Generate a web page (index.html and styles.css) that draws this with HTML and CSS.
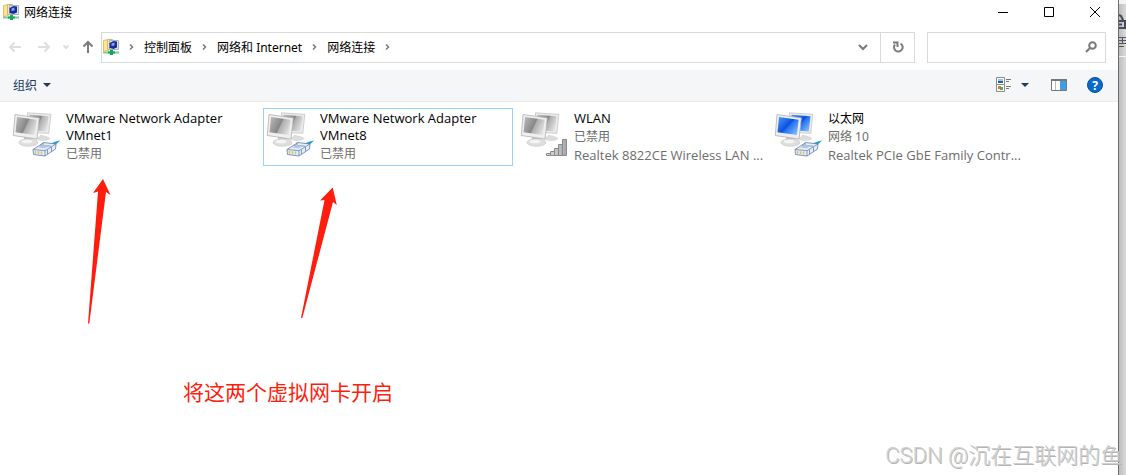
FILE: index.html
```
<!DOCTYPE html>
<html lang="zh-cn">

<head>
    <meta charset="UTF-8">
    <meta name="viewport" content="width=device-width, initial-scale=1.0">
    <title>网络连接</title>
    <link rel="stylesheet" href="styles.css">
</head>

<body>
    <!-- 公用图形 -->
    <svg class="defs" aria-hidden="true">
        <defs>
            <linearGradient id="grayScreen" x1="0" y1="0.3" x2="1" y2="0.7">
                <stop offset="0" stop-color="#b4b4b4" />
                <stop offset="0.48" stop-color="#868686" />
                <stop offset="0.52" stop-color="#acacac" />
                <stop offset="1" stop-color="#e6e6e6" />
            </linearGradient>
            <linearGradient id="blueScreen" x1="0" y1="0.1" x2="1" y2="0.9">
                <stop offset="0" stop-color="#4a96f6" />
                <stop offset="0.48" stop-color="#0a4fdd" />
                <stop offset="0.52" stop-color="#1f6cf0" />
                <stop offset="1" stop-color="#8cc4ff" />
            </linearGradient>
            <linearGradient id="barFill" x1="0" y1="0" x2="1" y2="0">
                <stop offset="0" stop-color="#dedede" />
                <stop offset="1" stop-color="#a8a8a8" />
            </linearGradient>
            <symbol id="netIcon" viewBox="0 0 16 16">
                <path d="M0.5 1.5l5-1v11l-5 1z" fill="#fbe696" stroke="#dcc06a" />
                <path d="M4.500.5h5v10h-5z" fill="#f8e7a5" stroke="#cdb878" />
                <path d="M6.500 1.500h9v9h-9z" fill="#dfe5ee" stroke="#a9b4c4" />
                <path d="M6.500 4l4-2 3.500.5v6l-3.500 1.500-4-1z" fill="#1a2a9e" />
                <path d="M8.500 4.500l3-1v3l-3 .5z" fill="#7fa9f5" />
                <path d="M8.500 10v3M0 13.500h16" stroke="#86c7a2" stroke-width="2" />
                <path d="M5 12.500h7v2H5zM7 11h3v5H7z" fill="#12a85a" />
            </symbol>
            <symbol id="monitors" viewBox="0 2 48 48">
                <path d="M28 27l6 1 1 3-8-1z" fill="#cfcfcf" />
                <ellipse cx="31" cy="30.500" rx="7" ry="2.500" fill="#dcdcdc" />
                <path d="M15.500 4.800l23.300 1.500-2 19-21-1z" fill="#ececec" stroke="#bdbdbd" stroke-width=".7" />
                <path d="M17.500 6.800l19 1.400-1.700 15.300-17-1.500z" fill="var(--screen)" />
                <path d="M12 29l8 1 1 4h-9z" fill="#bfbfbf" />
                <ellipse cx="16.500" cy="34.500" rx="9.500" ry="3.800" fill="#dedede" stroke="#c6c6c6" stroke-width=".6" />
                <ellipse cx="15" cy="33.500" rx="5.500" ry="1.800" fill="#f4f4f4" />
                <path d="M3 6.500L27.300 10 25 31 1.300 27.500z" fill="#efefef" stroke="#b2b2b2" stroke-width=".8" />
                <path d="M5 9l19.700 2.800-1.800 15.200L3.500 24.200z" fill="var(--screen)" />
            </symbol>
            <symbol id="plug" viewBox="0 2 48 48">
                <path d="M35 36.500c4-.5 6-3 13-4l-3.500 3.500-4 3z" fill="#55c0e4" />
                <path d="M41 35l7-2.500-6 5z" fill="#2193c4" />
                <path d="M21 41.500l11-7 12 1.500-.5 5L33 48l-11.500-1.500z" fill="#e4edf8" stroke="#5f7ba8" stroke-width=".8" />
                <path d="M21 41.500l12 1.200L44 36M33 42.700V48M28 37l3 .4v-3M31 37.400l8 .8M35.500 41.500v4.500M39.500 39v4.500" fill="none" stroke="#6c87b2" stroke-width=".8" />
                <path d="M26 39.500l7 .7 4-2.500-6.500-.7z" fill="#b4c6e0" />
                <path d="M23.500 43v2.700M26.500 43.300v2.700M29.500 43.600v2.700" stroke="#cfc268" stroke-width="1.500" />
            </symbol>
            <symbol id="signal" viewBox="0 2 48 48">
                <path d="M26.500 45.500h4v2h-4zM30.500 43.500h4v4h-4zM34.500 40.500h4v7h-4zM38.500 36.500h4v11h-4zM42.500 31.500h4v16h-4z" fill="url(#barFill)" stroke="#8a8a8a" />
            </symbol>
            <symbol id="chevron" viewBox="0 0 8 8">
                <path d="M2.500 1.500L5 4 2.500 6.500" fill="none" stroke="#7a7a7a" stroke-width="1.500" />
            </symbol>
        </defs>
    </svg>

    <div class="window">
        <header class="title-bar">
            <svg class="net-icon"><use href="#netIcon" /></svg>
            <h1>网络连接</h1>
            <div class="window-buttons">
                <button aria-label="最小化"><svg width="12" height="12"><path d="M1 6.500h10" /></svg></button>
                <button aria-label="最大化"><svg width="12" height="12"><path d="M1.500 1.500h9v9h-9z" /></svg></button>
                <button aria-label="关闭"><svg width="12" height="12"><path d="M1 1l10 10M11 1L1 11" /></svg></button>
            </div>
        </header>

        <nav class="nav-bar">
            <div class="nav-buttons">
                <button class="faded" aria-label="后退"><svg width="14" height="12"><path d="M13 6H2M6.500 1.500L2 6l4.500 4.500" /></svg></button>
                <button class="faded" aria-label="前进"><svg width="14" height="12"><path d="M1 6h11M7.500 1.500L12 6l-4.500 4.500" /></svg></button>
                <button class="faded recent" aria-label="最近位置"><svg width="8" height="6"><path d="M1.500 1.500L4 4l2.500-2.500" /></svg></button>
                <button aria-label="上移"><svg width="12" height="14"><path d="M6 13V2M1.500 6.500L6 2l4.500 4.500" /></svg></button>
            </div>
            <div class="address">
                <svg class="net-icon"><use href="#netIcon" /></svg>
                <svg class="chevron"><use href="#chevron" /></svg>
                <a href="#">控制面板</a>
                <svg class="chevron"><use href="#chevron" /></svg>
                <a href="#">网络和 Internet</a>
                <svg class="chevron"><use href="#chevron" /></svg>
                <a href="#">网络连接</a>
                <svg class="chevron"><use href="#chevron" /></svg>
                <button class="drop" aria-label="历史记录"><svg width="10" height="8"><path d="M1 2l4 4 4-4" /></svg></button>
                <button class="refresh" aria-label="刷新"><svg width="12" height="12"><path d="M8.500 2.500a4.300 4.300 0 1 1-5.500 1M1 1.500h4.500V6" /></svg></button>
            </div>
            <div class="search">
                <input type="text" aria-label="搜索">
                <svg width="12" height="12"><circle cx="7.500" cy="4.500" r="3.300" /><path d="M5 7L1 11" /></svg>
            </div>
        </nav>

        <div class="toolbar">
            <button class="organize">组织<span class="caret"></span></button>
            <div class="tools">
                <button class="view" aria-label="更改视图">
                    <svg width="16" height="16">
                        <path d="M.5.5h8v7h-8zM.5 7.500h8v7h-8z" fill="#fff" stroke="#8c8c8c" />
                        <path d="M2 2h5v2H2z" fill="#8fc9f3" />
                        <path d="M2 4h5v2H2z" fill="#31608f" />
                        <path d="M2 9h3v3H2z" fill="#e0743c" />
                        <path d="M4 10h3v3H4z" fill="#58a845" />
                        <path d="M10 2.500h5M10 4.500h3M10 9.500h5M10 11.500h3" stroke="#777" />
                    </svg>
                    <span class="caret"></span>
                </button>
                <button class="pane" aria-label="预览窗格">
                    <svg width="16" height="12">
                        <path d="M.5.5h15v11H.5z" fill="#fff" stroke="#777" />
                        <path d="M0 1h16" stroke="#777" stroke-width="2" />
                        <path d="M4.500 2v9" stroke="#bbb" />
                        <path d="M9 2h6v9H9z" fill="#3f9ee8" />
                    </svg>
                </button>
                <button class="help" aria-label="帮助">?</button>
            </div>
        </div>

        <main class="content">
            <ul class="connections">
                <li class="connection">
                    <svg class="icon"><use href="#monitors" /><use href="#plug" /></svg>
                    <div class="info">
                        <h2 class="device">VMware Network Adapter VMnet1</h2>
                        <p>已禁用</p>
                    </div>
                </li>
                <li class="connection selected">
                    <svg class="icon"><use href="#monitors" /><use href="#plug" /></svg>
                    <div class="info">
                        <h2 class="device">VMware Network Adapter VMnet8</h2>
                        <p>已禁用</p>
                    </div>
                </li>
                <li class="connection">
                    <svg class="icon"><use href="#monitors" /><use href="#signal" /></svg>
                    <div class="info">
                        <h2 class="device">WLAN</h2>
                        <p>已禁用</p>
                        <p class="device">Realtek 8822CE Wireless LAN ...</p>
                    </div>
                </li>
                <li class="connection enabled">
                    <svg class="icon"><use href="#monitors" /><use href="#plug" /></svg>
                    <div class="info">
                        <h2>以太网</h2>
                        <p>网络 10</p>
                        <p class="device">Realtek PCIe GbE Family Contr...</p>
                    </div>
                </li>
            </ul>
        </main>
    </div>

    <aside class="behind">
        <svg width="7" height="60">
            <path d="M0 0h7v4H0z" fill="#f4f4f4" />
            <path d="M0 15l2 1 2 4v2M0 21h6v7H0M0 24.500h3" fill="none" stroke="#4a4a58" stroke-width="2" />
            <path d="M0 37.500h7M0 40.500h7M0 43.500h7M0 46.500h5M3.500 37v7" stroke="#55555f" />
            <path d="M0 56.500h7" stroke="#f2f2f2" />
        </svg>
    </aside>

    <!-- 标注 -->
    <svg class="arrows" width="360" height="330">
        <path d="M103 179L93 193l5-1.500L88 323.500h1.300L106 192l4.500 3z" />
        <path d="M332.700 187.500L320 200.500l4.500-.5L301 318h1.300L333 202l3.800 3z" />
    </svg>
    <p class="note">将这两个虚拟网卡开启</p>
    <p class="watermark">CSDN @沉在互联网的鱼</p>
</body>

</html>
```
FILE: styles.css
```
* {
    box-sizing: border-box;
}

body {
    display: flex;
    position: relative;
    min-height: 100vh;
    margin: 0;
    overflow: hidden;
    background-color: #d9d9d9;
    font-family: "Noto Sans", "Noto Sans CJK SC", sans-serif;
    font-size: 12px;
    color: #000;
}

h1,
h2,
p,
ul {
    margin: 0;
    padding: 0;
    font-size: 12px;
    font-weight: normal;
}

button {
    display: flex;
    align-items: center;
    justify-content: center;
    padding: 0;
    border: none;
    background: none;
    font: inherit;
    cursor: pointer;
}

.defs {
    position: absolute;
    width: 0;
    height: 0;
}

.window {
    flex: 1;
    border-right: 1px solid #6b6b6b;
    background-color: #fff;
}

.net-icon {
    width: 16px;
    height: 16px;
}

/* 标题栏 */
.title-bar {
    display: flex;
    align-items: center;
    gap: 5px;
    height: 23px;
    padding-left: 3px;
}

.window-buttons {
    display: flex;
    margin-left: auto;
}

.window-buttons button {
    width: 46px;
    height: 23px;
}

.window-buttons path {
    fill: none;
    stroke: #000;
}

/* 导航栏 */
.nav-bar {
    display: flex;
    align-items: center;
    height: 47px;
    padding-top: 1px;
    padding-right: 12px;
}

.nav-buttons {
    display: flex;
    width: 101px;
}

.nav-buttons button {
    width: 27px;
    height: 30px;
}

.nav-buttons .faded {
    width: 29px;
}

.nav-buttons .recent {
    width: 16px;
}

.nav-buttons path {
    fill: none;
    stroke: #7a7a7a;
    stroke-width: 2;
}

.nav-buttons .faded path {
    stroke: #dedede;
}

.address {
    display: flex;
    flex: 1;
    align-items: center;
    height: 31px;
    padding-left: 1px;
    border: 1px solid #d9d9d9;
}

.address a {
    color: #000;
    text-decoration: none;
}

.chevron {
    width: 25px;
    height: 8px;
}

.address path {
    fill: none;
    stroke: #7a7a7a;
    stroke-width: 2;
}

.drop,
.refresh {
    width: 34px;
    height: 29px;
}

.drop {
    margin-left: auto;
}

.refresh {
    border-left: 1px solid #d9d9d9;
}

.search {
    display: flex;
    align-items: center;
    width: 179px;
    height: 31px;
    margin-left: 12px;
    padding-right: 8px;
    border: 1px solid #d9d9d9;
}

.search input {
    flex: 1;
    min-width: 0;
    border: none;
    outline: none;
    font: inherit;
}

.search svg {
    fill: none;
    stroke: #7a7a7a;
    stroke-width: 2;
}

/* 工具栏 */
.toolbar {
    display: flex;
    align-items: center;
    justify-content: space-between;
    height: 32px;
    padding: 0 15px 1px 13px;
    border-bottom: 1px solid #e8eaec;
    background-color: #f4f6f8;
}

.organize {
    gap: 6px;
    color: #1e395b;
}

.caret {
    border: 4px solid transparent;
    border-top-color: #1e395b;
    border-bottom: none;
}

.tools {
    display: flex;
    align-items: center;
}

.view {
    gap: 9px;
    margin-right: 22px;
}

.pane {
    margin-right: 20px;
}

.help {
    width: 16px;
    height: 16px;
    border: 1px solid #0b4f94;
    border-radius: 50%;
    background-color: #0a6acb;
    font-weight: bold;
    color: #fff;
}

/* 连接列表 */
.content {
    padding: 6px 9px;
}

.connections {
    display: grid;
    grid-template-columns: repeat(auto-fill, 250px);
    gap: 4px;
    list-style: none;
}

.connection {
    --screen: url(#grayScreen);
    display: flex;
    gap: 6px;
    min-height: 58px;
    padding: 1px 2px;
    border: 1px solid transparent;
}

.connection.selected {
    border-color: #99d1ff;
}

.connection.enabled {
    --screen: url(#blueScreen);
}

.icon {
    flex: none;
    width: 48px;
    height: 48px;
}

.info {
    flex: 1;
    min-width: 0;
}

.info h2 {
    margin-bottom: 1px;
    line-height: 17px;
}

.info p {
    line-height: 18px;
    color: #6d6d6d;
    white-space: nowrap;
}

.info .device {
    font-family: "Open Sans", "Noto Sans CJK SC", sans-serif;
    font-size: 13px;
}

.behind {
    width: 7px;
    background: linear-gradient(to right, #bdbdbd, #dadada);
}

.behind svg {
    display: block;
}

/* 标注 */
.arrows {
    position: absolute;
    top: 0;
    left: 0;
    fill: #ff1d0d;
    pointer-events: none;
}

.note {
    position: absolute;
    top: 377px;
    left: 183px;
    font-size: 21px;
    line-height: 30px;
    color: #ff1d0d;
}

.watermark {
    position: absolute;
    right: 4px;
    bottom: 4px;
    font-family: Roboto, "Noto Sans CJK SC", sans-serif;
    font-size: 22px;
    font-weight: 300;
    line-height: 30px;
    color: #cfcfcf;
    text-shadow: 1px 1px 0 #b4b4b4;
}
```
